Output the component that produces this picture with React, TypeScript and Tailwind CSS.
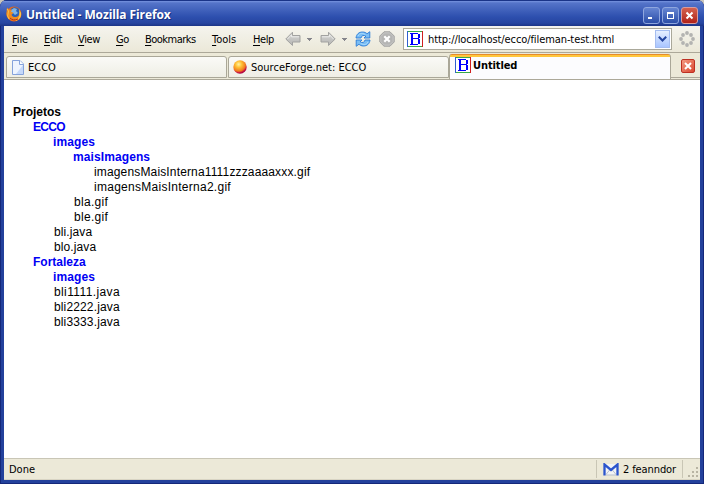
import type { ReactNode } from "react";

const UI = "font-['DejaVu_Sans_Condensed','DejaVu_Sans',sans-serif] text-[11px] leading-[14px] text-black whitespace-nowrap";
const CONDENSED = "[font-stretch:condensed]";

function FirefoxIcon() {
  return (
    <svg width="16" height="16" viewBox="0 0 16 16" className="mt-px shrink-0">
      <circle cx="8" cy="8" r="7.500" fill="#e8681a" />
      <circle cx="8.800" cy="6.600" r="5.300" fill="#2b62b8" />
      <path d="M5 4l3-2 3 1-1 2 2 2-3 2-2-2-3 1z" fill="#7fb4e6" />
      <path d="M1 1.500l2 2 3 .2-1 2 2.500 1-2 2c1 3 5 3 7 1l1-3 1.500-1c.5 5-3 8.500-7 8.500S.3 12 .4 7.500z" fill="#f08a20" />
      <path d="M13 3l2 4c.6 4-2 7.500-6 8 3-2 4.500-4 4.500-7z" fill="#fcc84a" />
      <path d="M1 3l1.500 2-.8 5L3 13" stroke="#fbc24a" fill="none" />
      <path d="M4 12c2 2 5 2.500 8 1" stroke="#b83312" fill="none" />
    </svg>
  );
}

function BIcon() {
  return (
    <svg width="16" height="16" viewBox="0 0 16 16" className="shrink-0" shapeRendering="crispEdges">
      <path d="M0 0h16v16H0z" fill="#fff" />
      <path d="M0 .5h16M0 15.500h16" stroke="#39a94a" />
      <path d="M.5 0v16" stroke="#3060d0" />
      <path d="M15.500 0v16" stroke="#d02020" />
      <path d="M3 2h8v1H3zM3 13h8v1H3zM4 2h2v12H4zM5 7h6v1H5zM11 3h1v1h-1zM11 3h2v4h-2zM10 7h2v1h-2zM11 8h2v5h-2z" fill="#00f" />
    </svg>
  );
}

function Arrow({ flip }: { flip?: boolean }) {
  return (
    <svg width="16" height="16" viewBox="0 0 16 16" className={flip ? "-scale-x-100 shrink-0" : "shrink-0"}>
      <defs>
        <linearGradient id="steel" x2="0" y2="1">
          <stop stopColor="#d8d8d6" />
          <stop offset="1" stopColor="#b4b4b2" />
        </linearGradient>
      </defs>
      <path d="M.8 8L7.500 1.200V4.500h7.500v6.500H7.500v3.500z" fill="url(#steel)" stroke="#a2a2a0" strokeLinejoin="round" />
      <path d="M2.500 8l4-4.200v2h7.500" fill="none" stroke="#ececea" />
    </svg>
  );
}

function Caret() {
  return (
    <svg width="5" height="3" viewBox="0 0 5 3" shapeRendering="crispEdges" className="shrink-0">
      <path d="M0 0h5v1H4v1H3v1H2V2H1V1H0z" fill="#85858c" />
    </svg>
  );
}

function Reload() {
  return (
    <svg width="16" height="16" viewBox="0 0 16 16" className="shrink-0">
      <g fill="#79bdf5" stroke="#2a7bd6" strokeWidth=".9" strokeLinejoin="round">
        <path d="M1 7C1.500 3 4 1 7.500 1c2 0 3.500.7 4.500 1.800L14.800.7V7H9l2-2C8.500 3.800 6.500 4.500 6 7z" />
        <path d="M15 9c-.5 4-3 6-6.500 6-2 0-3.500-.7-4.500-1.800L1.200 15.300V9H7l-2 2c2.500 1.200 4.500.5 5-2z" />
      </g>
      <path d="M3 5c1.500-3 5-3.500 7.500-1M13 11c-1.500 3-5 3.500-7.500 1" fill="none" stroke="#b9e3ff" strokeWidth=".8" />
    </svg>
  );
}

function Stop() {
  return (
    <svg width="16" height="16" viewBox="0 0 16 16" className="shrink-0">
      <path d="M5 .8h6L15.200 5v6L11 15.200H5L.8 11V5z" fill="#b5b5b4" stroke="#a3a3a2" />
      <path d="M5.400 1.900h5.200l3.500 3.500v5.200l-3.500 3.500H5.400l-3.500-3.500V5.400z" fill="none" stroke="#cbcbca" strokeWidth=".8" />
      <path d="M5.300 5.300l5.400 5.400M10.700 5.300l-5.400 5.400" stroke="#fff" strokeWidth="2.200" />
    </svg>
  );
}

function Throbber() {
  const dots = ["8,2", "12,4", "14,8", "12,12", "8,14", "4,12", "2,8", "4,4"];
  return (
    <svg width="16" height="16" viewBox="0 0 16 16" className="shrink-0">
      {dots.map((dot) => {
        const [x, y] = dot.split(",");
        return <circle key={dot} cx={x} cy={y} r="1.900" fill="#b3b3b1" />;
      })}
    </svg>
  );
}

function PageIcon() {
  return (
    <svg width="12" height="15" viewBox="0 0 12 15" className="shrink-0">
      <path d="M.5.5h7.500L11.500 4v10.500H.5z" fill="#eef4ff" stroke="#86a3dc" />
      <path d="M4 14L11 5v9z" fill="#c5d8fa" />
      <path d="M7.500.5v4h4" fill="#fff" stroke="#86a3dc" />
    </svg>
  );
}

function BallIcon() {
  return (
    <svg width="14" height="14" viewBox="0 0 14 14" className="shrink-0">
      <defs>
        <radialGradient id="ball" cx=".4" cy=".3" r=".75">
          <stop stopColor="#fff3a0" />
          <stop offset=".32" stopColor="#ffc033" />
          <stop offset=".68" stopColor="#f07a21" />
          <stop offset=".85" stopColor="#c50b42" />
          <stop offset="1" stopColor="#8d0038" />
        </radialGradient>
      </defs>
      <circle cx="7" cy="7" r="6.700" fill="url(#ball)" />
    </svg>
  );
}

function WindowButton({ close, children }: { close?: boolean; children: ReactNode }) {
  return (
    <div className={`flex h-[17px] w-[17px] items-center justify-center rounded-[3px] border ${close ? "border-[#d99c9c] bg-linear-to-b from-[#d4604e] to-[#b01f17]" : "border-[#8fa6de] bg-linear-to-b from-[#6685d2] to-[#2c4ea8]"}`}>
      <svg width="11" height="11" viewBox="0 0 11 11" className="shrink-0">{children}</svg>
    </div>
  );
}

const menus = [
  ["File", "w-[32px] tracking-[-0.1px]"],
  ["Edit", "w-[34px] tracking-[-0.3px]"],
  ["View", "w-[38px] tracking-[-0.4px]"],
  ["Go", "w-[29px] tracking-[-0.5px]"],
  ["Bookmarks", "w-[67px] tracking-[-0.52px]"],
  ["Tools", "w-[41px]"],
  ["Help", "w-[32px] tracking-[-0.4px]"],
];

const tree: [string, string, string][] = [
  ["Projetos", "pl-[9px]", "root"],
  ["ECCO", "pl-[29px] tracking-[-0.7px]", "dir"],
  ["images", "pl-[49px] tracking-[0.1px]", "dir"],
  ["maisImagens", "pl-[69px] tracking-[0.1px]", "dir"],
  ["imagensMaisInterna1111zzzaaaaxxx.gif", "pl-[90px] tracking-[0.15px]", "file"],
  ["imagensMaisInterna2.gif", "pl-[90px] tracking-[0.27px]", "file"],
  ["bla.gif", "pl-[70px] tracking-[0.3px]", "file"],
  ["ble.gif", "pl-[70px] tracking-[0.3px]", "file"],
  ["bli.java", "pl-[50px] tracking-[0.1px]", "file"],
  ["blo.java", "pl-[50px] tracking-[0.1px]", "file"],
  ["Fortaleza", "pl-[29px]", "dir"],
  ["images", "pl-[49px] tracking-[0.1px]", "dir"],
  ["bli1111.java", "pl-[50px] tracking-[0.38px]", "file"],
  ["bli2222.java", "pl-[50px] tracking-[0.14px]", "file"],
  ["bli3333.java", "pl-[50px] tracking-[0.14px]", "file"],
];

const kinds: Record<string, string> = {
  root: "font-bold text-black",
  dir: "font-bold text-[#0000f4]",
  file: "text-black",
};

export default function App() {
  return (
    <div className="h-[484px] w-[704px] overflow-hidden bg-[#c9c5bb]">
      <div className={`${UI} flex h-[484px] w-[704px] flex-col overflow-hidden rounded-t-[7px] bg-[#23419c] shadow-[inset_1px_0_#14287a,inset_-1px_0_#14287a,inset_0_-1px_#14287a]`}>
        <header className="flex h-[26px] shrink-0 items-center border-t border-[#1a3488] bg-[linear-gradient(to_bottom,#7794e0_0px,#5574c9_2px,#4c6cc3_5px,#2d4fae_16px,#2746a1_22px,#1c3587_25px)] pr-[6px] pl-[6px]">
          <FirefoxIcon />
          <h1 className="ml-[4px] grow pt-[3px] font-['Open_Sans',sans-serif] text-[12px] leading-[16px] font-bold tracking-[-0.1px] text-white [text-shadow:1px_1px_#17307f]">Untitled - Mozilla Firefox</h1>
          <div className="flex gap-[2px] pt-[3px]">
            <WindowButton><path d="M2 7h4v2H2z" fill="#fff" /></WindowButton>
            <WindowButton><path d="M2 2h7v7H2zM3 4v4h5V4z" fill="#fff" fillRule="evenodd" /></WindowButton>
            <WindowButton close><path d="M2.500 2.500l6 6M8.500 2.500l-6 6" stroke="#fff" strokeWidth="2" /></WindowButton>
          </div>
        </header>

        <div className={`${CONDENSED} mx-[4px] flex h-[454px] shrink-0 flex-col bg-[#ece9d8]`}>
          <nav className="flex h-[27px] shrink-0 items-center border-b border-[#aca899] bg-linear-to-b from-[#f5f4ee] to-[#ebe8d8] pl-[8px]">
            {menus.map(([label, width]) => (
              <div key={label} className={`${width} shrink-0 pt-[2px]`}>
                <span className="underline underline-offset-2">{label[0]}</span>
                {label.slice(1)}
              </div>
            ))}
            <div className="flex w-[118px] shrink-0 items-center">
              <Arrow />
              <div className="ml-[6px] flex"><Caret /></div>
              <div className="ml-[8px] flex"><Arrow flip /></div>
              <div className="ml-[6px] flex"><Caret /></div>
              <div className="ml-[8px] flex"><Reload /></div>
              <div className="ml-[8px] flex"><Stop /></div>
            </div>
            <div className="flex h-[22px] w-[269px] shrink-0 items-center border border-[#aaa89a] bg-white pr-px pl-[3px]">
              <BIcon />
              <span className="ml-[5px] grow pt-[2px] tracking-[-0.09px]">http://localhost/ecco/fileman-test.html</span>
              <div className="flex h-[18px] w-[15px] items-center justify-center border border-[#a5bdf0] bg-linear-to-b from-[#e6efff] to-[#a9c5ff]">
                <svg width="9" height="6" viewBox="0 0 9 6"><path d="M.8.8L4.500 4.500 8.200.8" fill="none" stroke="#24459f" strokeWidth="2" /></svg>
              </div>
            </div>
            <div className="ml-[7px] flex"><Throbber /></div>
          </nav>

          <div className="flex h-[27px] shrink-0 border-b border-[#aca899] pl-[2px]">
            <div className="mt-[3px] flex h-[22px] w-[221px] shrink-0 items-center rounded-t-[3px] border border-[#aaa798] bg-linear-to-b from-[#fafaf7] to-[#efeee5] pl-[5px]">
              <PageIcon />
              <span className="ml-[4px] pt-[2px]">ECCO</span>
            </div>
            <div className="mt-[3px] ml-px flex h-[22px] w-[221px] shrink-0 items-center rounded-t-[3px] border border-[#aaa798] bg-linear-to-b from-[#fafaf7] to-[#efeee5] pl-[4px]">
              <BallIcon />
              <span className="ml-[4px] pt-[2px]">SourceForge.net: ECCO</span>
            </div>
            <div className="mt-px flex h-[25px] w-[222px] shrink-0 items-start rounded-t-[3px] border-x border-[#aaa798] bg-[linear-gradient(to_bottom,#e68b2c_0_1px,#ffc73c_1px_3px,#fcfcfe_3px)] pt-[3px] pl-[5px]">
              <BIcon />
              <span className="ml-[2px] pt-[2px] font-bold tracking-[-0.1px]">Untitled</span>
            </div>
            <div className="flex h-[25px] grow items-center justify-center border-b border-[#aca899]">
              <div className="mt-[2px] ml-[5px] flex h-[14px] w-[14px] items-center justify-center rounded-[2px] border border-[#bd3022] bg-linear-to-br from-[#f39a82] to-[#d9432d]">
                <svg width="8" height="8" viewBox="0 0 8 8"><path d="M1 1l6 6M7 1L1 7" stroke="#fff" strokeWidth="2" /></svg>
              </div>
            </div>
          </div>

          <main className="h-[378px] shrink-0 bg-white pt-[25px] font-['Liberation_Sans',Arial,sans-serif] text-[12px] leading-[15px]">
            {tree.map(([name, indent, kind], i) => (
              <div key={i} className={`${indent} ${kinds[kind]}`}>{name}</div>
            ))}
          </main>

          <footer className="flex h-[22px] shrink-0 items-center border-t border-b border-t-[#c9c6b6] border-b-[#d8d4c3] pl-[5px]">
            <span className="grow pt-[2px]">Done</span>
            <div className="flex h-[18px] w-[87px] items-center border-x border-[#c9c6b5] pl-[6px]">
              <svg width="16" height="13" viewBox="0 0 16 13">
                <path d="M2 1h12v11H2z" fill="#f3f4f5" />
                <path d="M3 11.500l4-5M13 11.500l-4-5M3 12h10" stroke="#b6bfce" fill="none" />
                <path d="M1.500 12.500V1.500L8 7l6.500-5.500v11" stroke="#2b55cd" strokeWidth="2.300" fill="none" />
              </svg>
              <span className="ml-[4px] pt-[2px] tracking-[-0.1px]">2 feanndor</span>
            </div>
            <svg width="12" height="12" viewBox="0 0 12 12" className="mt-[8px] ml-[5px]" shapeRendering="crispEdges">
              <path d="M8 0h2v2H8zM4 4h2v2H4zM8 4h2v2H8zM0 8h2v2H0zM4 8h2v2H4zM8 8h2v2H8z" fill="#b8b4a3" />
            </svg>
          </footer>
        </div>
      </div>
    </div>
  );
}
